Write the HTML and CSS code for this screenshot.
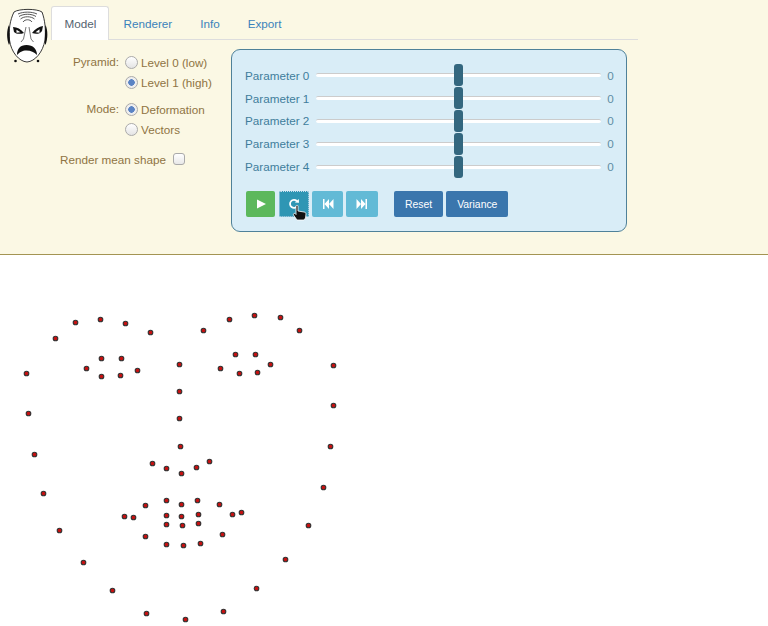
FILE: index.html
```html
<!DOCTYPE html>
<html lang="en">
<head>
    <meta charset="UTF-8">
    <meta name="viewport" content="width=device-width, initial-scale=1.0">
    <link rel="stylesheet" href="styles.css">
    <title>Face Model</title>
</head>
<body>
    <header class="top">
        <svg class="logo" width="44" height="56" viewBox="6 8 44 56">
            <path d="M14 12 C19 8.500 37 8.500 42 12 C45 20 46 30 45 40 C43 52 35 61.500 27 62 C19 61.500 11 52 9.500 40 C8.500 30 10 20 14 12 Z" fill="#fff" stroke="#222" stroke-width="0.9"/>
            <path d="M9 25 C6.500 30 6.500 39 9 45 L9.800 43 L9.300 27 Z M45.500 25 C48 30 48 39 45.500 45 L44.800 43 L45.200 27 Z" fill="#111"/>
            <path d="M18 14 C23 11.500 32 11.500 37 14 M19 16.500 C23.500 13.500 31.500 13.500 36 16.500 M20.500 19 C24 16 31 16 34.500 19 M23 22 C25 19 30 19 32 22" fill="none" stroke="#444" stroke-width="0.9"/>
            <path d="M13 27 C17 27 21 29 24 33 C20 34.500 16 34 14 32 Z M43 26 C39 26.500 35 29 32 33 C36 34.500 40 34 42 31 Z" fill="#111"/>
            <path d="M16.500 29.800 L20.500 32.300 L16.500 32.800 Z M39.500 29.300 L35.500 32.300 L39.500 32.800 Z" fill="#fff"/>
            <path d="M26 27 L23.500 39 L21 42 M29 27 L31 39 L33.500 42" fill="none" stroke="#666" stroke-width="0.9"/>
            <path d="M17 55 C17 49 20 45 26.500 45 C33 45 37 49 37 55 C34 52 31 50.500 26.500 50.500 C22 50.500 20 52 17 55 Z" fill="#111"/>
            <circle cx="15.500" cy="61" r="1.300" fill="#111"/>
            <circle cx="38" cy="61" r="1.300" fill="#111"/>
        </svg>
        <div class="main">
            <ul class="tabs">
                <li class="tab active">Model</li>
                <li class="tab">Renderer</li>
                <li class="tab">Info</li>
                <li class="tab">Export</li>
            </ul>
            <div class="content">
                <form class="options">
                    <div class="group">
                        <span class="group-label">Pyramid:</span>
                        <div class="choices">
                            <label class="choice"><input type="radio" name="pyramid">Level 0 (low)</label>
                            <label class="choice"><input type="radio" name="pyramid" checked>Level 1 (high)</label>
                        </div>
                    </div>
                    <div class="group">
                        <span class="group-label">Mode:</span>
                        <div class="choices">
                            <label class="choice"><input type="radio" name="mode" checked>Deformation</label>
                            <label class="choice"><input type="radio" name="mode">Vectors</label>
                        </div>
                    </div>
                    <label class="mean">Render mean shape <input type="checkbox"></label>
                </form>
                <div class="panel">
                    <div class="params">
                        <label class="param">Parameter 0 <input type="range" min="-3" max="3" step="0.1" value="0"><span>0</span></label>
                        <label class="param">Parameter 1 <input type="range" min="-3" max="3" step="0.1" value="0"><span>0</span></label>
                        <label class="param">Parameter 2 <input type="range" min="-3" max="3" step="0.1" value="0"><span>0</span></label>
                        <label class="param">Parameter 3 <input type="range" min="-3" max="3" step="0.1" value="0"><span>0</span></label>
                        <label class="param">Parameter 4 <input type="range" min="-3" max="3" step="0.1" value="0"><span>0</span></label>
                    </div>
                    <div class="controls">
                        <div class="btn-group">
                            <button class="btn btn-play" type="button">
                                <svg width="12" height="12" viewBox="0 0 12 12"><path d="M2 1.500 L11 6 L2 10.500 Z" fill="#fff"/></svg>
                            </button>
                            <button class="btn btn-loop" type="button">
                                <svg width="12" height="12" viewBox="0 0 12 12"><path d="M9.300 8.200 A4 4 0 1 1 8.800 3" fill="none" stroke="#fff" stroke-width="1.800"/><path d="M6.800 4.600 L11 4.800 L10.800 1 Z" fill="#fff"/></svg>
                                <svg class="cursor" width="15" height="16" viewBox="0 0 15 16"><path d="M4 1 C4 0 6 0 6 1 L6 6 L12 7 C13.500 7.300 14 8 14 9 L13.500 13 L12 15 L5 15 L1.500 10 C1 9 2 8 3 8.500 L4 9.500 Z" fill="#111" stroke="#fff" stroke-width="0.800"/></svg>
                            </button>
                            <button class="btn btn-step" type="button">
                                <svg width="12" height="10" viewBox="0 0 12 10"><path d="M1 0 H2.500 V10 H1 Z M7 0 V10 L2.500 5 Z M11.500 0 V10 L7 5 Z" fill="#fff"/></svg>
                            </button>
                            <button class="btn btn-step" type="button">
                                <svg width="12" height="10" viewBox="0 0 12 10"><path d="M11 0 H9.500 V10 H11 Z M5 0 V10 L9.500 5 Z M0.500 0 V10 L5 5 Z" fill="#fff"/></svg>
                            </button>
                        </div>
                        <div class="btn-group">
                            <button class="btn btn-text" type="button">Reset</button>
                            <button class="btn btn-text" type="button">Variance</button>
                        </div>
                    </div>
                </div>
            </div>
        </div>
    </header>

    <svg class="points" id="points" width="768" height="371" viewBox="0 255 768 371"></svg>

    <script>
        // landmark positions in page coordinates
        var landmarks = [
            [55,338],[75,322],[100,319],[125,323],[150,332],[203,330],[229,319],[254,315],[280,317],[299,330],
            [333,365],[333,405],[330,446],[323,487],[308,525],[285,559],[256,588],[223,611],[185,619],[146,613],
            [112,590],[83,562],[59,530],[43,493],[34,454],[28,413],[26,373],
            [86,368],[101,358],[121,358],[137,370],[120,375],[101,376],
            [220,368],[235,354],[255,354],[270,364],[257,372],[239,373],
            [179,364],[179,391],[179,418],[180,446],[152,463],[166,468],[181,473],[196,467],[209,461],
            [124,516],[133,517],[145,505],[166,500],[181,504],[197,500],[219,504],[232,514],[241,512],
            [222,534],[200,543],[183,545],[166,544],[145,536],[166,515],[181,516],[198,514],[166,524],[182,525],[198,523]
        ];
        var svg = document.getElementById('points');
        landmarks.forEach(function(p) {
            var dot = document.createElementNS('http://www.w3.org/2000/svg', 'circle');
            dot.setAttribute('cx', p[0] + 0.5);
            dot.setAttribute('cy', p[1] + 0.5);
            dot.setAttribute('r', 2.3);
            dot.setAttribute('class', 'point');
            svg.appendChild(dot);
        });
    </script>
</body>
</html>
```

FILE: styles.css
```css
body {
    font-family: 'Liberation Sans', Arial, sans-serif;
    font-size: 11.7px;
    margin: 0;
    background: #fff;
    overflow: hidden;
}

.top {
    display: flex;
    height: 255px;
    box-sizing: border-box;
    background: #fbf8e4;
    border-bottom: 1px solid #a39452;
    padding: 6px 130px 0 6px;
}

.logo {
    flex: none;
    margin: 2px 1px 0 0;
}

.main {
    flex: 1;
}

.tabs {
    display: flex;
    list-style: none;
    margin: 0;
    padding: 0;
    height: 33px;
    border-bottom: 1px solid #ddd;
}

.tab {
    padding: 11px 13.5px 0;
    height: 33px;
    box-sizing: border-box;
    margin-right: 1px;
    color: #3a82bb;
}

.tab.active {
    background: #fff;
    color: #556370;
    border: 1px solid #ddd;
    border-bottom: none;
    border-radius: 3px 3px 0 0;
    height: 34px;
    width: 58px;
    margin-right: 1px;
    padding: 10px 0 0 1px;
    text-align: center;
}

.content {
    display: flex;
    margin-top: 9px;
}

.options {
    width: 180px;
    color: #8f7443;
}

.group {
    display: flex;
    margin-bottom: 4px;
}

.group-label {
    width: 68px;
    text-align: right;
    line-height: 20px;
    margin-top: 3px;
}

.choices {
    margin-left: 6px;
    margin-top: 3px;
}

.choice {
    display: flex;
    align-items: center;
    height: 20px;
    white-space: nowrap;
}

.choice input {
    appearance: none;
    width: 13px;
    height: 13px;
    margin: 0 3px 0 0;
    border: 1px solid #aaa;
    border-radius: 50%;
    background: linear-gradient(#fff, #e4e4e4);
}

.choice input:checked {
    background: radial-gradient(circle, #5b84c4 0, #5b84c4 3px, #eee 3.5px);
}

.mean {
    display: flex;
    align-items: center;
    margin-left: 9px;
    height: 20px;
    margin-top: 10px;
    white-space: nowrap;
}

.mean input {
    appearance: none;
    width: 12px;
    height: 12px;
    margin: 0 0 0 7px;
    border: 1px solid #aaa;
    border-radius: 3px;
    background: linear-gradient(#fff, #e8e8e8);
}

.panel {
    width: 396px;
    height: 183px;
    box-sizing: border-box;
    background: #d9edf7;
    border: 1px solid #4f8199;
    border-radius: 9px;
    padding: 14px 13px 0;
    color: #3f7d9c;
}

.params {
    height: 114px;
}

.param {
    display: flex;
    align-items: center;
    height: 22.8px;
    white-space: nowrap;
}

.param input {
    appearance: none;
    flex: none;
    width: 285px;
    height: 22px;
    margin: 0 6px 0 7px;
    background: transparent;
}

.param input::-webkit-slider-runnable-track {
    height: 4px;
    background: #fff;
    border-top: 1px solid #ccc;
    border-radius: 3px;
    box-sizing: border-box;
}

.param input::-webkit-slider-thumb {
    appearance: none;
    width: 9px;
    height: 22px;
    margin-top: -10px;
    background: #33677f;
    border-radius: 3px;
}

.param span {
    color: #5f8ea5;
}

.controls {
    display: flex;
    gap: 16px;
    margin: 13px 0 0 1px;
}

.btn-group {
    display: flex;
    gap: 3px;
}

.btn {
    position: relative;
    display: flex;
    align-items: center;
    justify-content: center;
    height: 26px;
    padding: 0;
    border: none;
    border-radius: 2px;
    color: #fff;
    font-family: inherit;
    font-size: 10.4px;
}

.btn-play {
    width: 29px;
    background: #5cb85c;
}

.btn-loop {
    width: 30px;
    margin-left: 1px;
    background: #2f96b4;
    outline: 1px dotted #cde;
    outline-offset: -1px;
}

.btn-step {
    width: 31px;
    background: #62bad6;
}

.btn-step + .btn-step {
    width: 32px;
}

.btn-text {
    padding: 0 11px;
    background: #3a76ad;
}

.cursor {
    position: absolute;
    left: 13px;
    top: 14px;
}

.points {
    display: block;
}

.point {
    fill: #c81010;
    stroke: #333;
    stroke-width: 1.1;
}
```
